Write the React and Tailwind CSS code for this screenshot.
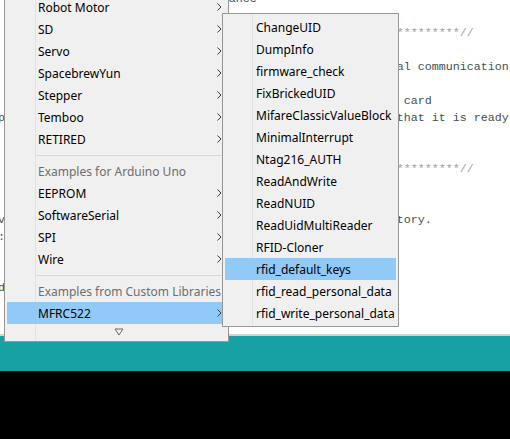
import React from "react";

const code = [
  { col: 33, text: "ance" },
  { col: 0, text: "" },
  { col: 0, text: "*".repeat(65) + "//", comment: true },
  { col: 0, text: "" },
  { col: 57, text: "al communications with the PC" },
  { col: 0, text: "" },
  { col: 57, text: " card" },
  { col: 57, text: "that it is ready", lead: "p" },
  { col: 0, text: "" },
  { col: 0, text: "" },
  { col: 0, text: "*".repeat(65) + "//", comment: true },
  { col: 0, text: "" },
  { col: 0, text: "" },
  { col: 57, text: "tory.", lead: "v" },
  { col: 0, text: "", lead: ":" },
  { col: 0, text: "" },
  { col: 0, text: "" },
  { col: 0, text: "", lead: "d" },
];

const examples = ["Robot Motor", "SD", "Servo", "SpacebrewYun", "Stepper", "Temboo", "RETIRED"];
const unoExamples = ["EEPROM", "SoftwareSerial", "SPI", "Wire"];
const sketches = [
  "ChangeUID",
  "DumpInfo",
  "firmware_check",
  "FixBrickedUID",
  "MifareClassicValueBlock",
  "MinimalInterrupt",
  "Ntag216_AUTH",
  "ReadAndWrite",
  "ReadNUID",
  "ReadUidMultiReader",
  "RFID-Cloner",
  "rfid_default_keys",
  "rfid_read_personal_data",
  "rfid_write_personal_data",
];

function Chevron() {
  return (
    <svg width="5" height="8" viewBox="0 0 5 8" className="shrink-0">
      <path d="M0.5 0.5 L4 4 L0.5 7.5" fill="none" stroke="#3c3c3c" strokeWidth="1" />
    </svg>
  );
}

function MenuRow({ label, hasSub, active, header }) {
  return (
    <div className={"flex h-[22px] items-center mx-[2px] pl-[31px] pr-[4px] " + (active ? "bg-[#91c9f7]" : "")}>
      <span className={"relative top-[1px] flex-1 whitespace-nowrap " + (header ? "text-[#6d6d6d]" : "text-black")}>{label}</span>
      {hasSub ? <Chevron /> : null}
    </div>
  );
}

function Separator() {
  return (
    <div className="h-[10px] flex items-center pl-[31px]">
      <div className="h-px w-full bg-[#d7d7d7]" />
    </div>
  );
}

export default function App() {
  return (
    <div className="relative w-[510px] h-[439px] overflow-hidden flex flex-col bg-white">
      {/* editor */}
      <div className="h-[334px] bg-white overflow-hidden">
        <div className="-mt-[9px] -ml-[2px] font-['Liberation_Mono',monospace] text-[11.67px] leading-[17px] text-[#434f54] whitespace-pre">
          {code.map((line, i) => (
            <div key={i} className={"h-[17px] " + (line.comment ? "text-[#95a5a6]" : "")}>
              {(line.lead || " ") + " ".repeat(Math.max(line.col - 1, 0)) + line.text}
            </div>
          ))}
        </div>
      </div>
      <div className="h-[2px] bg-[#d4d4d4]" />
      <div className="h-[35px] bg-[#17a1a5]" />
      <div className="flex-1 bg-black" />

      {/* Examples menu */}
      <div className="absolute left-[4px] top-[-4px] w-[225px] h-[346px] bg-[#f0f0f0] border-x border-b border-[#979797] font-['Noto_Sans',sans-serif] text-[12px]">
        <div className="absolute left-[30px] top-0 bottom-0 w-px bg-[#e2e2e2]" />
        <div className="relative flex flex-col">
          {examples.map((e) => (
            <MenuRow key={e} label={e} hasSub />
          ))}
          <Separator />
          <MenuRow label="Examples for Arduino Uno" header />
          {unoExamples.map((e) => (
            <MenuRow key={e} label={e} hasSub />
          ))}
          <Separator />
          <MenuRow label="Examples from Custom Libraries" header />
          <MenuRow label="MFRC522" hasSub active />
          <div className="h-[16px] flex items-center justify-center pl-[4px]">
            <svg width="10" height="8" viewBox="0 0 10 8">
              <path d="M1 1 L9 1 L5 7 Z" fill="none" stroke="#6a6a6a" strokeWidth="1" />
            </svg>
          </div>
        </div>
      </div>

      {/* MFRC522 submenu */}
      <div className="absolute left-[222px] top-[13px] w-[177px] bg-[#f0f0f0] border border-[#979797] py-[2px] font-['Noto_Sans',sans-serif] text-[12px]">
        <div className="absolute left-[29px] top-0 bottom-0 w-px bg-[#e2e2e2]" />
        <div className="relative flex flex-col">
          {sketches.map((s) => (
            <MenuRow key={s} label={s} active={s === "rfid_default_keys"} />
          ))}
        </div>
      </div>
    </div>
  );
}
